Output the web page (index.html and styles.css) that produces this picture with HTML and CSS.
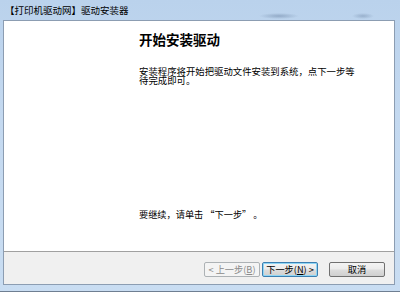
FILE: index.html
```html
<!DOCTYPE html>
<html lang="zh-CN">
<head>
<meta charset="utf-8">
<title>驱动安装器</title>
<link rel="stylesheet" href="styles.css">
</head>
<body>
<div class="window">
  <div class="titlebar">【打印机驱动网】驱动安装器</div>
  <div class="client">
    <div class="content">
      <h1 class="heading">开始安装驱动</h1>
      <p class="desc">安装程序将开始把驱动文件安装到系统，点下一步等待完成即可。</p>
      <p class="hint">要继续，请单击 “下一步” 。</p>
    </div>
    <div class="footer">
      <button class="btn btn-disabled" disabled>&lt; 上一步(<u>B</u>)</button>
      <button class="btn btn-default">下一步(<u>N</u>) &gt;</button>
      <button class="btn btn-cancel">取消</button>
    </div>
  </div>
</div>
</body>
</html>
```
FILE: styles.css
```css
* { box-sizing: border-box; }
html, body { margin: 0; padding: 0; }
body {
  width: 400px;
  height: 292px;
  overflow: hidden;
  font-family: "Noto Sans CJK SC", "Noto Sans", sans-serif;
  color: #000;
}
.window {
  width: 400px;
  height: 292px;
  display: flex;
  flex-direction: column;
  padding: 0 5px 6px 3px;
  background: linear-gradient(to bottom, #bad2ec 0%, #c4d9f0 40%, #c9ddf2 100%);
  border-bottom: 1px solid #6f7f92;
}
.titlebar {
  height: 20px;
  flex: none;
  font-size: 9.5px;
  line-height: 20px;
  padding-left: 2px;
  white-space: nowrap;
  background:
    radial-gradient(ellipse 20px 3px at 276px 16px, rgba(70, 95, 130, 0.35), rgba(70, 95, 130, 0) 100%),
    radial-gradient(ellipse 11px 3px at 360px 16px, rgba(70, 95, 130, 0.3), rgba(70, 95, 130, 0) 100%);
}
.client {
  flex: 1;
  display: flex;
  flex-direction: column;
  border: 1px solid #8c9db2;
  background: #f0f0f0;
}
.content {
  height: 231px;
  flex: none;
  background: #fff;
  border-bottom: 1px solid #a0a0a0;
  display: flex;
  flex-direction: column;
  padding: 11px 0 32px 135px;
}
.heading {
  margin: 0;
  font-size: 13.5px;
  line-height: 14px;
  font-weight: bold;
}
.desc {
  margin: 21px 0 0 0;
  width: 220px;
  font-size: 9.4px;
  line-height: 9px;
}
.hint {
  margin: auto 0 0 0;
  font-size: 9.2px;
  line-height: 10px;
  white-space: nowrap;
}
.footer {
  flex: 1;
  display: flex;
  align-items: flex-start;
  justify-content: flex-end;
  padding: 10px 9px 0 0;
}
.btn {
  width: 56px;
  height: 15px;
  padding: 0;
  margin: 0;
  font-family: "Noto Sans CJK SC", "Noto Sans", sans-serif;
  font-size: 9.2px;
  line-height: 13px;
  border-radius: 2px;
  border: 1px solid #707070;
  background: linear-gradient(to bottom, #f4f4f4 0%, #ebebeb 48%, #dddddd 52%, #cfcfcf 100%);
  color: #000;
  white-space: nowrap;
}
.btn u { text-decoration: underline; }
.btn-disabled {
  border-color: #adb2b5;
  background: #f4f4f4;
  color: #8a8a8a;
}
.btn-default {
  margin-left: 2px;
  border-color: #3c7fb1;
  box-shadow: inset 0 0 0 1px #8fd6f5;
}
.btn-cancel {
  margin-left: 11px;
}
```
